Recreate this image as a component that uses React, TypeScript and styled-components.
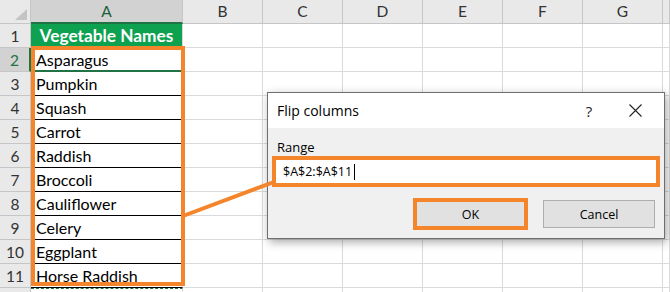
import React from "react"
import styled, { createGlobalStyle } from "styled-components"

const ORANGE = "#f5852a"
const EXCEL_GREEN = "#217346"

const GlobalStyle = createGlobalStyle`
	html, body {
		margin: 0;
		padding: 0;
		background: #ffffff;
		overflow: hidden;
	}
	body {
		width: 670px;
		height: 292px;
	}
`

const Sheet = styled.div`
	position: relative;
	width: 670px;
	height: 292px;
	overflow: hidden;
	display: grid;
	grid-template-columns: 31px 152px repeat(6, 80px) 1fr;
	grid-template-rows: repeat(13, 24px);
	font-family: Lato, "Liberation Sans", sans-serif;
	font-size: 16px;
	color: #000;
`

const Corner = styled.div`
	background: #e9e9e9;
	border-right: 1px solid #c6c6c6;
	border-bottom: 1px solid #c6c6c6;
	box-sizing: border-box;
	display: flex;
	align-items: flex-end;
	justify-content: flex-end;
	padding: 0 3px 3px 0;

	svg {
		display: block;
	}
`

const ColHeader = styled.div<{ $active?: boolean }>`
	box-sizing: border-box;
	background: ${(p) => (p.$active ? "#d2d2d2" : "#e9e9e9")};
	border-right: 1px solid #c6c6c6;
	border-bottom: ${(p) => (p.$active ? `2px solid ${EXCEL_GREEN}` : "1px solid #c6c6c6")};
	color: ${(p) => (p.$active ? "#1d5e3a" : "#333")};
	text-align: center;
	font-size: 15.5px;
	line-height: 23px;
`

const RowHeader = styled.div<{ $active?: boolean }>`
	box-sizing: border-box;
	background: ${(p) => (p.$active ? "#d2d2d2" : "#e9e9e9")};
	border-right: ${(p) => (p.$active ? `2px solid ${EXCEL_GREEN}` : "1px solid #c6c6c6")};
	border-bottom: 1px solid #c6c6c6;
	color: ${(p) => (p.$active ? EXCEL_GREEN : "#333")};
	text-align: center;
	font-size: 15.5px;
	line-height: 24px;
`

const Cell = styled.div<{ $variant?: "title" | "data" | "plain"; $selected?: boolean; $marquee?: boolean }>`
	box-sizing: border-box;
	border-right: 1px solid #dadada;
	border-bottom: 1px solid ${(p) => (p.$variant === "data" ? "#000" : "#dadada")};
	white-space: nowrap;
	overflow: hidden;
	line-height: 23px;
	padding-left: 5px;
	${(p) =>
		p.$variant === "title" &&
		`
		background: #0ea150;
		color: #ffffff;
		font-weight: 700;
		font-size: 17.3px;
		text-align: center;
		padding-left: 0;
		border-bottom-color: #0ea150;
	`}
	${(p) => p.$selected && `border-bottom: 2px solid ${EXCEL_GREEN};`}
	${(p) => p.$marquee && `border-top: 1px dashed ${EXCEL_GREEN};`}
`

const RangeHighlight = styled.div`
	position: absolute;
	left: 31px;
	top: 46px;
	width: 154px;
	height: 240px;
	box-sizing: border-box;
	border: 4px solid ${ORANGE};
	pointer-events: none;
`

const Connector = styled.svg`
	position: absolute;
	left: 0;
	top: 0;
	z-index: 3;
	pointer-events: none;
`

const Dialog = styled.div`
	position: absolute;
	left: 267px;
	top: 92px;
	width: 398px;
	box-sizing: border-box;
	border: 1px solid #6f6f6f;
	background: #f0f0f0;
	box-shadow: 2px 3px 9px rgba(0, 0, 0, 0.35);
	font-family: "Open Sans", "Noto Sans", sans-serif;
	color: #000;
	z-index: 2;
`

const TitleBar = styled.div`
	height: 35px;
	background: #ffffff;
	display: flex;
	align-items: center;
	padding-left: 9px;
	padding-right: 6px;
`

const TitleText = styled.div`
	font-size: 14px;
	flex: 1;
`

const TitleAction = styled.div`
	width: 46px;
	display: flex;
	justify-content: center;
	align-items: center;
	font-size: 15px;
	color: #222;
`

const DialogBody = styled.div`
	padding: 10px 4px 8px 4px;
`

const FieldLabel = styled.div`
	font-size: 13px;
	line-height: 18px;
	padding-left: 5px;
`

const RangeInput = styled.div`
	height: 31px;
	box-sizing: border-box;
	border: 4px solid ${ORANGE};
	background: #ffffff;
	font-size: 12.5px;
	line-height: 23px;
	padding-left: 7px;
	display: flex;
	align-items: center;
`

const Caret = styled.span`
	display: inline-block;
	width: 1px;
	height: 16px;
	background: #000;
	margin-left: 2px;
`

const ButtonRow = styled.div`
	margin-top: 11px;
	display: flex;
	justify-content: flex-end;
	align-items: center;
	gap: 15px;
	padding-right: 5px;
`

const DialogButton = styled.div<{ $highlight?: boolean }>`
	box-sizing: border-box;
	width: ${(p) => (p.$highlight ? "115px" : "112px")};
	height: ${(p) => (p.$highlight ? "32px" : "28px")};
	background: #e1e1e1;
	border: ${(p) => (p.$highlight ? `4px solid ${ORANGE}` : "1px solid #adadad")};
	display: flex;
	align-items: center;
	justify-content: center;
	font-size: 12.5px;
`

const vegetables = [
	"Asparagus",
	"Pumpkin",
	"Squash",
	"Carrot",
	"Raddish",
	"Broccoli",
	"Cauliflower",
	"Celery",
	"Eggplant",
	"Horse Raddish",
]

const columns = ["A", "B", "C", "D", "E", "F", "G", ""]

export default function App() {
	const rows: React.ReactNode[] = []

	rows.push(
		<React.Fragment key="r1">
			<RowHeader>1</RowHeader>
			<Cell $variant="title">Vegetable Names</Cell>
			{columns.slice(1).map((c, i) => (
				<Cell key={i} />
			))}
		</React.Fragment>,
	)

	vegetables.forEach((name, idx) => {
		const n = idx + 2
		rows.push(
			<React.Fragment key={n}>
				<RowHeader $active={n === 2}>{n}</RowHeader>
				<Cell
					$variant="data"
					$selected={n === 2}
				>
					{name}
				</Cell>
				{columns.slice(1).map((c, i) => (
					<Cell key={i} />
				))}
			</React.Fragment>,
		)
	})

	// row 12 is only a sliver at the bottom edge, its number is out of view
	rows.push(
		<React.Fragment key="r12">
			<RowHeader />
			<Cell $marquee />
			{columns.slice(1).map((c, i) => (
				<Cell key={i} />
			))}
		</React.Fragment>,
	)

	return (
		<>
			<GlobalStyle />
			<Sheet>
				<Corner>
					<svg
						width="12"
						height="11"
						viewBox="0 0 12 11"
					>
						<polygon
							points="12,0 12,11 0,11"
							fill="#c4c4c4"
						/>
					</svg>
				</Corner>
				{columns.map((c, i) => (
					<ColHeader
						key={i}
						$active={c === "A"}
					>
						{c}
					</ColHeader>
				))}
				{rows}

				<RangeHighlight />

				<Dialog>
					<TitleBar>
						<TitleText>Flip columns</TitleText>
						<TitleAction>?</TitleAction>
						<TitleAction>
							<svg
								width="13"
								height="13"
								viewBox="0 0 13 13"
							>
								<path
									d="M0.5 0.5 L12.5 12.5 M12.5 0.5 L0.5 12.5"
									stroke="#222"
									strokeWidth="1.1"
								/>
							</svg>
						</TitleAction>
					</TitleBar>
					<DialogBody>
						<FieldLabel>Range</FieldLabel>
						<RangeInput>
							$A$2:$A$11
							<Caret />
						</RangeInput>
						<ButtonRow>
							<DialogButton $highlight>OK</DialogButton>
							<DialogButton>Cancel</DialogButton>
						</ButtonRow>
					</DialogBody>
				</Dialog>

				<Connector
					width="670"
					height="292"
				>
					<line
						x1="183"
						y1="216"
						x2="274"
						y2="182"
						stroke={ORANGE}
						strokeWidth="4"
					/>
				</Connector>
			</Sheet>
		</>
	)
}
